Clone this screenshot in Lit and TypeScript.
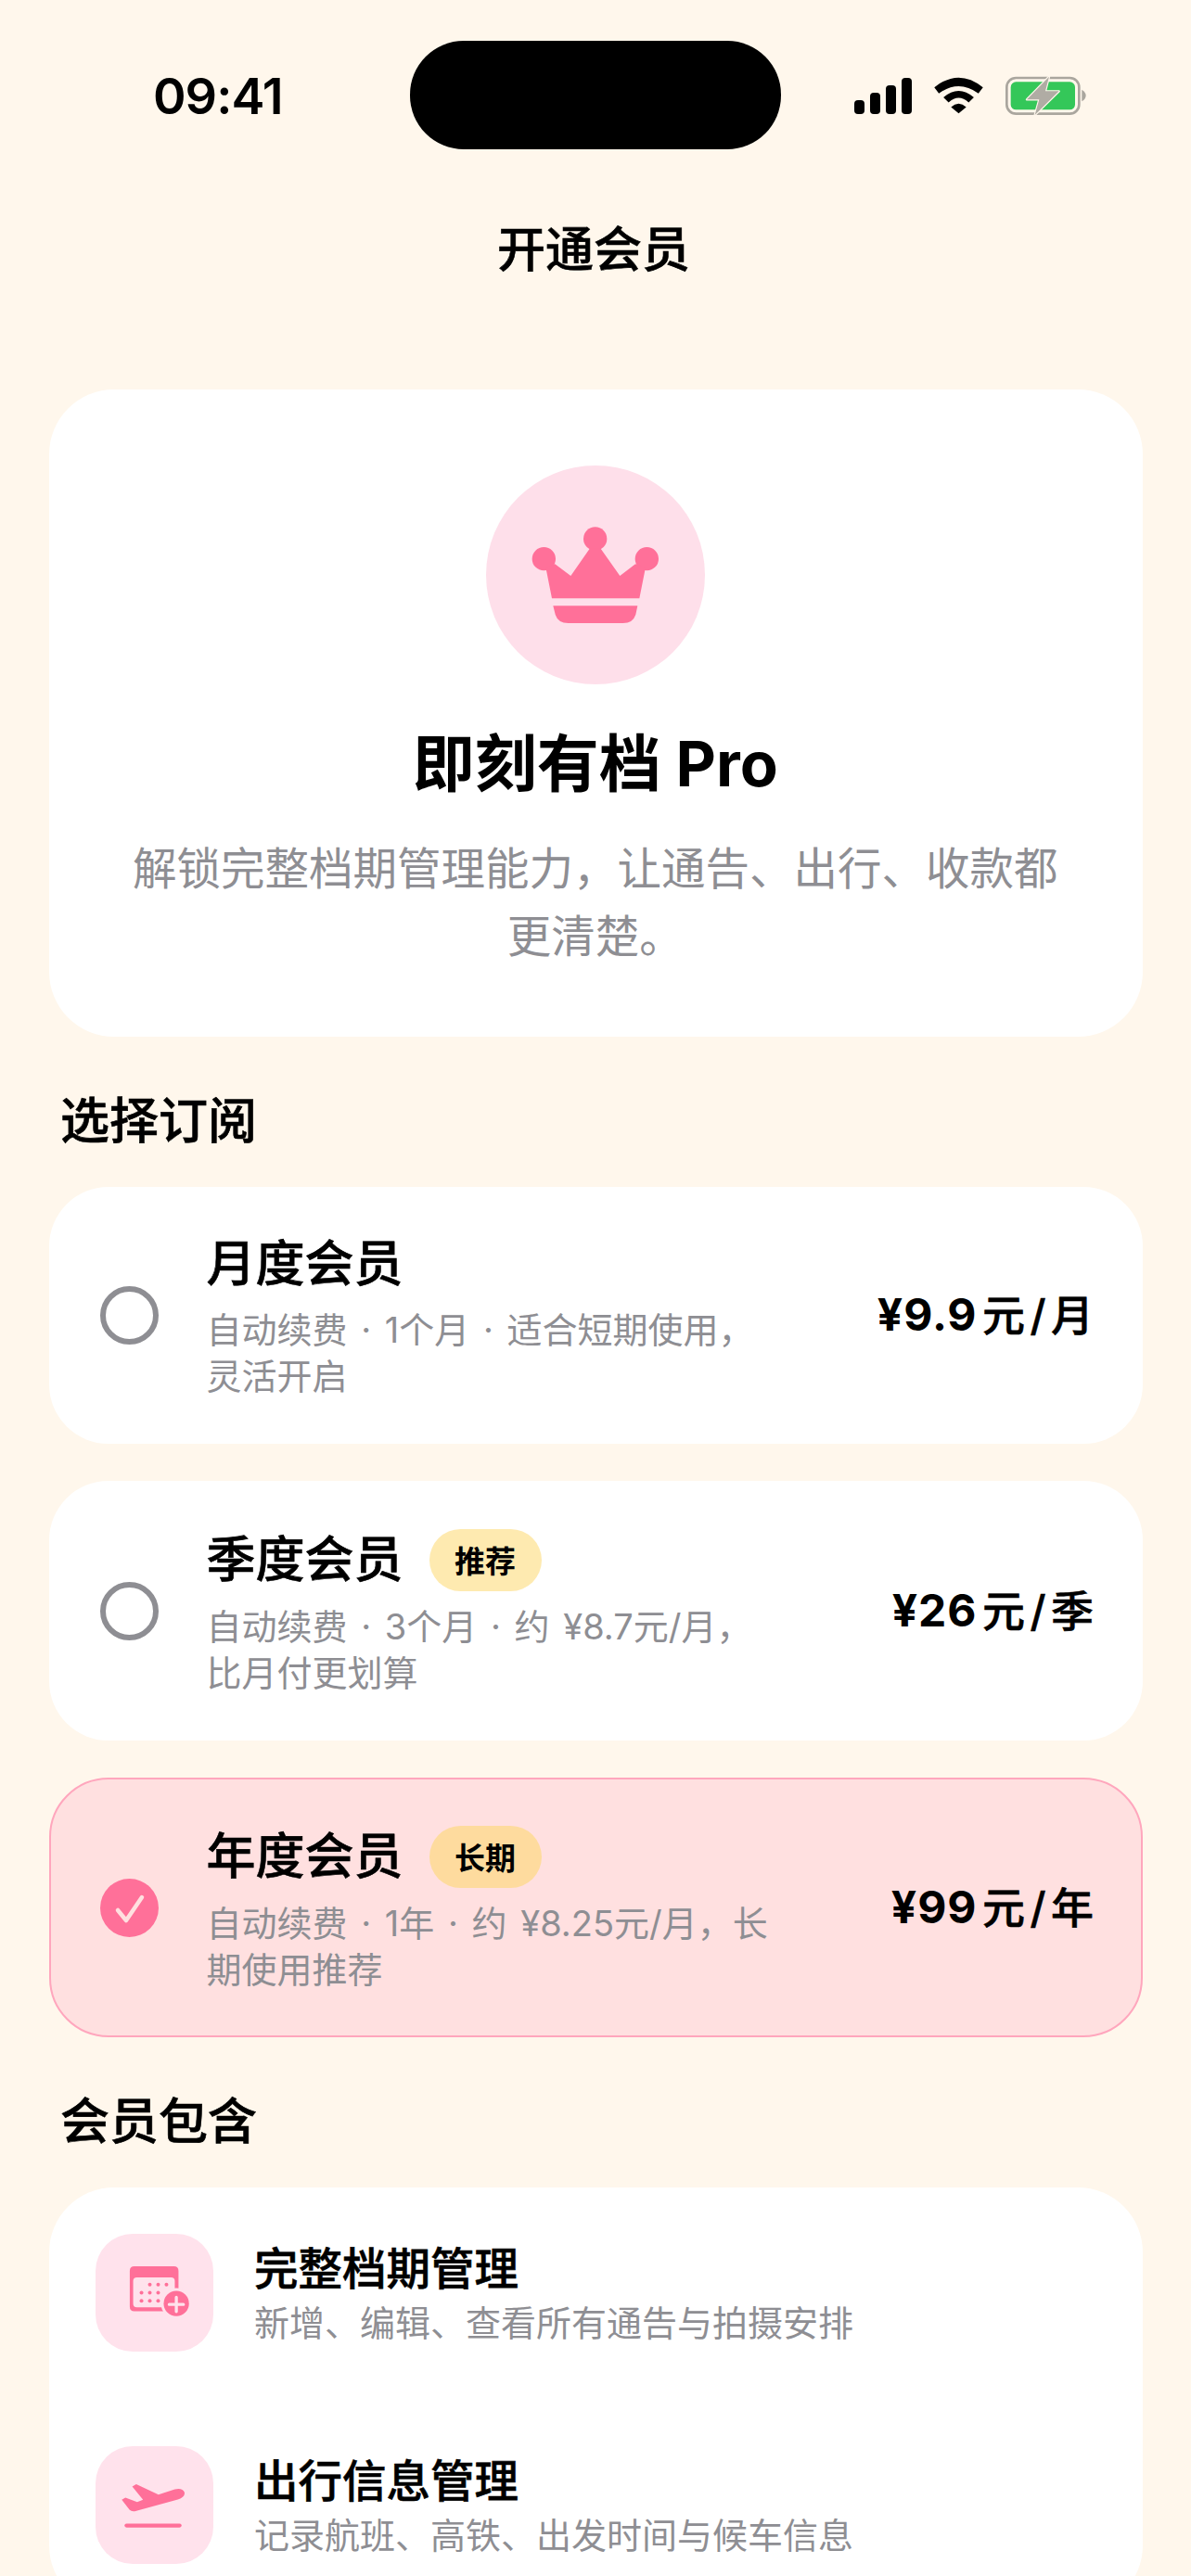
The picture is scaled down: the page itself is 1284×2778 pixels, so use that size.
import { LitElement, html, css, svg } from 'lit';
import { customElement } from 'lit/decorators.js';
import { classMap } from 'lit/directives/class-map.js';

const plans = [
  { name: '月度会员', desc: '自动续费 · 1个月 · 适合短期使用，灵活开启', amount: '¥9.9', unit: '月' },
  { name: '季度会员', badge: '推荐', desc: '自动续费 · 3个月 · 约 ¥8.7元/月，比月付更划算', amount: '¥26', unit: '季' },
  { name: '年度会员', badge: '长期', desc: '自动续费 · 1年 · 约 ¥8.25元/月，长期使用推荐', amount: '¥99', unit: '年', selected: true },
];

const calendarIcon = svg`
  <svg class="tile-svg" viewBox="68 88 382 380">
    <path fill-rule="evenodd" fill="#ff7099" d="M194 192H322Q337 192 337 207V323Q337 338 322 338H194Q179 338 179 323V207Q179 192 194 192ZM202 228Q190 228 190 240V313Q190 325 202 325H313Q325 325 325 313V240Q325 228 313 228Z"/>
    <g fill="#ff7099">
      <circle cx="244" cy="252" r="6"/><circle cx="271" cy="252" r="6"/><circle cx="298" cy="252" r="6"/>
      <circle cx="217" cy="278" r="6"/><circle cx="244" cy="278" r="6"/><circle cx="271" cy="278" r="6"/>
      <circle cx="217" cy="304" r="6"/><circle cx="244" cy="304" r="6"/><circle cx="271" cy="304" r="6"/>
    </g>
    <circle cx="330" cy="313" r="50" fill="#ffe2ec"/>
    <circle cx="330" cy="313" r="41" fill="#ff7099"/>
    <path d="M307 316H353M330 293V339" stroke="#ffe2ec" stroke-width="10" stroke-linecap="round"/>
  </svg>`;

const planeIcon = svg`
  <svg class="tile-svg" viewBox="68 775 382 380">
    <path fill="#ff7099" d="M153 948L165 941L203 955L222 948L187 905L200 897L272 931L325 914Q350 908 357 925Q357 940 335 947L195 985Q185 987 178 980Z"/>
    <rect x="162" y="1025" width="185" height="13" rx="6.5" fill="#ff7099"/>
  </svg>`;

const features = [
  { title: '完整档期管理', desc: '新增、编辑、查看所有通告与拍摄安排', icon: calendarIcon },
  { title: '出行信息管理', desc: '记录航班、高铁、出发时间与候车信息', icon: planeIcon },
];

@customElement('app-root')
export class AppRoot extends LitElement {
  static styles = css`
    :host {
      display: block;
      width: 1284px;
      height: 2778px;
      overflow: hidden;
      background: #fff7ec;
      color: #000;
      font-family: Inter, 'Noto Sans CJK SC', sans-serif;
    }

    .status {
      display: grid;
      grid-template-columns: 442px 400px 1fr;
      align-items: center;
      padding-top: 44px;
    }
    .time {
      padding: 2px 0 0 165px;
      font-size: 54px;
      font-weight: 600;
      letter-spacing: -1px;
      line-height: 60px;
    }
    .island {
      height: 117px;
      border-radius: 58px;
      background: #000;
    }
    .status-icons {
      display: flex;
      align-items: center;
      padding-left: 79px;
      gap: 24px;
    }
    .signal { width: 62px; height: 40px; display: block; }
    .wifi { width: 53px; height: 40px; display: block; }
    .battery { width: 87px; height: 42px; display: block; }

    .nav {
      box-sizing: border-box;
      height: 216px;
      display: flex;
      align-items: center;
      justify-content: center;
      padding: 0 4px 7px 0;
      font-size: 52px;
      font-weight: 500;
      -webkit-text-stroke: 0.6px #000;
    }

    .content {
      margin-top: 43px;
      padding: 0 52px 0 53px;
    }

    .hero {
      padding: 82px 81.5px 72px 80px;
      border-radius: 70px;
      background: #fff;
      text-align: center;
    }
    .crown-wrap {
      width: 236px;
      height: 236px;
      margin: 0 auto;
      border-radius: 50%;
      background: #fedfea;
    }
    .crown-wrap svg { display: block; width: 236px; height: 236px; }
    .hero h1 {
      margin: 36px 0 0;
      font-size: 67px;
      line-height: 100px;
      font-weight: 700;
    }
    .hero p {
      margin: 27px 0 0;
      font-size: 47.5px;
      line-height: 72.5px;
      color: #8e8e93;
    }

    .section {
      margin: 55px 0 35px 12px;
      font-size: 53px;
      line-height: 72px;
      font-weight: 500;
      -webkit-text-stroke: 0.6px #000;
    }

    .plans {
      display: flex;
      flex-direction: column;
      gap: 40px;
    }
    .plan {
      display: flex;
      align-items: center;
      box-sizing: border-box;
      padding: 46px 50px 46px 52.5px;
      border: 2.5px solid transparent;
      border-radius: 64px;
      background: #fff;
    }
    .plan.selected {
      border-color: #ffa6bd;
      background: #ffe0e0;
    }
    .radio { flex: none; width: 63px; height: 63px; display: block; }
    .plan-text {
      flex: none;
      width: 612px;
      margin-left: 52px;
    }
    .plan-head {
      display: flex;
      align-items: center;
      gap: 28px;
      min-height: 71px;
    }
    .plan-name {
      font-size: 53px;
      font-weight: 500;
      line-height: 71px;
      -webkit-text-stroke: 0.6px #000;
    }
    .badge {
      width: 121px;
      height: 67px;
      margin: 3.5px 0;
      display: flex;
      align-items: center;
      justify-content: center;
      border-radius: 34px;
      font-size: 33px;
      font-weight: 700;
      background: #feeab0;
    }
    .badge.long { background: #fedb9e; }
    .plan-desc {
      margin-top: 10px;
      font-size: 38px;
      line-height: 50px;
      word-spacing: 4px;
      color: #8e8e93;
    }
    .price {
      margin: 0 1px 7px auto;
      font-size: 48px;
      font-weight: 700;
      letter-spacing: 1px;
      white-space: nowrap;
    }
    .price span {
      margin-left: 5.5px;
      font-size: 46px;
      font-weight: 500;
      letter-spacing: 0;
      -webkit-text-stroke: 0.6px #000;
    }

    .features {
      display: flex;
      flex-direction: column;
      gap: 102px;
      padding: 50px;
      border-radius: 70px;
      background: #fff;
    }
    .feature {
      display: flex;
      align-items: center;
      gap: 44px;
    }
    .tile {
      flex: none;
      width: 127px;
      height: 127px;
      border-radius: 40px;
      background: #ffe2ec;
    }
    .tile-svg { display: block; width: 127px; height: 127px; }
    .feature-title {
      font-size: 47.5px;
      font-weight: 500;
      line-height: 60px;
      -webkit-text-stroke: 0.6px #000;
    }
    .feature-desc {
      margin-top: 4px;
      font-size: 38px;
      line-height: 48px;
      color: #8e8e93;
    }
  `;

  renderStatus() {
    return html`
      <div class="status">
        <div class="time">09:41</div>
        <div class="island"></div>
        <div class="status-icons">
          <svg class="signal" viewBox="0 0 62 40">
            <rect x="0" y="25" width="11" height="15" rx="4"/>
            <rect x="17" y="17" width="11" height="23" rx="4"/>
            <rect x="34" y="9" width="11" height="31" rx="4"/>
            <rect x="51" y="1" width="11" height="39" rx="4"/>
          </svg>
          <svg class="wifi" viewBox="440 98 160 122">
            <path d="M440 132Q520 68 600 132L585 152Q520 105 455 152Z"/>
            <path d="M470 165Q520 122 570 165L553 182Q520 152 487 182Z"/>
            <path d="M495 197Q520 175 545 197L520 218Z"/>
          </svg>
          <svg class="battery" viewBox="673 96 261 126">
            <rect x="677" y="102" width="234" height="116" rx="30" fill="none" stroke="#aaa69e" stroke-width="8"/>
            <rect x="690" y="115" width="208" height="90" rx="17" fill="#34c759"/>
            <path d="M920 140Q933 148 933 159Q933 170 920 178Z" fill="#aaa69e"/>
            <path d="M814 98L742 172H782L768 222L846 145H802Z" fill="#b0aca4" stroke="#fff7ec" stroke-width="7" stroke-linejoin="round" paint-order="stroke"/>
          </svg>
        </div>
      </div>
    `;
  }

  renderPlan(p: (typeof plans)[number]) {
    return html`
      <div class=${classMap({ plan: true, selected: !!p.selected })}>
        ${p.selected
          ? svg`<svg class="radio" viewBox="0 0 63 63">
              <circle cx="31.5" cy="31.5" r="31.5" fill="#ff7099"/>
              <path d="M19 34L28 45L45 20" fill="none" stroke="#ffe0e0" stroke-width="4.5" stroke-linecap="round" stroke-linejoin="round"/>
            </svg>`
          : svg`<svg class="radio" viewBox="0 0 63 63">
              <circle cx="31.5" cy="31.5" r="28.5" fill="none" stroke="#8e8e93" stroke-width="6"/>
            </svg>`}
        <div class="plan-text">
          <div class="plan-head">
            <div class="plan-name">${p.name}</div>
            ${p.badge
              ? html`<div class=${classMap({ badge: true, long: p.badge === '长期' })}>${p.badge}</div>`
              : ''}
          </div>
          <div class="plan-desc">${p.desc}</div>
        </div>
        <div class="price">${p.amount}<span>元</span><span>/</span><span>${p.unit}</span></div>
      </div>
    `;
  }

  render() {
    return html`
      ${this.renderStatus()}
      <div class="nav">开通会员</div>
      <div class="content">
        <div class="hero">
          <div class="crown-wrap">
            <svg viewBox="132 66 708 708">
              <g fill="#ff7099">
                <circle cx="485" cy="303" r="38"/>
                <circle cx="319" cy="368" r="38"/>
                <circle cx="652" cy="368" r="38"/>
                <path d="M325 395L345 496H628L648 395L615 385L565 423L503 335H467L406 423L355 385Z"/>
                <path d="M349 520H622L616 548Q607 576 575 576H398Q365 576 356 548Z"/>
              </g>
            </svg>
          </div>
          <h1>即刻有档 Pro</h1>
          <p>解锁完整档期管理能力，让通告、出行、收款都更清楚。</p>
        </div>

        <div class="section">选择订阅</div>
        <div class="plans">${plans.map((p) => this.renderPlan(p))}</div>

        <div class="section">会员包含</div>
        <div class="features">
          ${features.map(
            (f) => html`
              <div class="feature">
                <div class="tile">${f.icon}</div>
                <div>
                  <div class="feature-title">${f.title}</div>
                  <div class="feature-desc">${f.desc}</div>
                </div>
              </div>
            `
          )}
        </div>
      </div>
    `;
  }
}
